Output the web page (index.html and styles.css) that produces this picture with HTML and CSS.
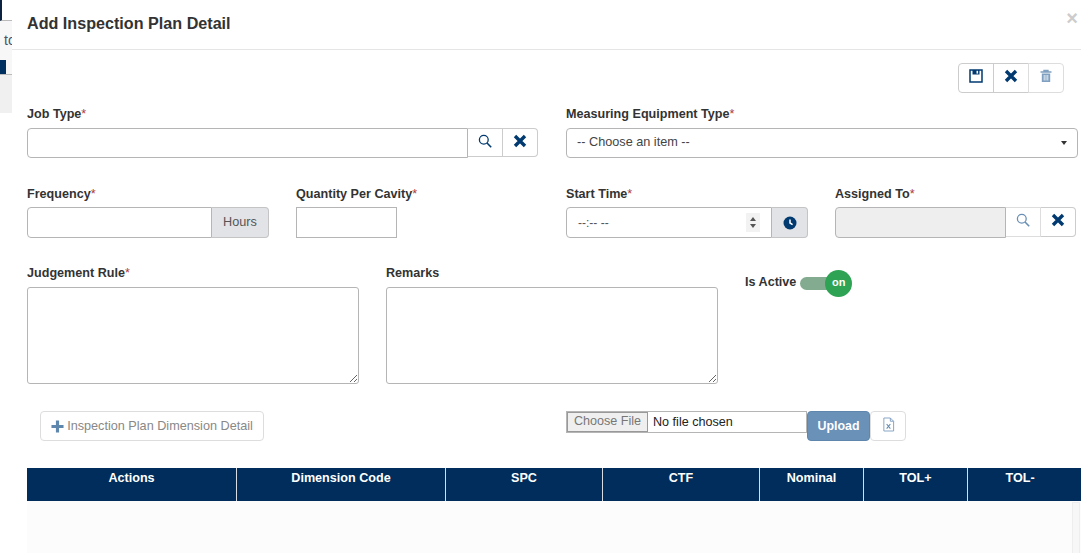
FILE: index.html
```html
<!DOCTYPE html>
<html lang="en">
<head>
  <meta charset="UTF-8" />
  <title>Add Inspection Plan Detail</title>
  <link rel="stylesheet" href="styles.css">
</head>
<body>
  <div class="behind">
    <div class="behind-top"></div>
    <div class="behind-text">to</div>
    <div class="behind-bar"><span></span></div>
    <div class="behind-foot"></div>
  </div>

  <div class="modal">
    <div class="modal-header">
      <h4>Add Inspection Plan Detail</h4>
      <span class="close">&times;</span>
    </div>

    <div class="modal-body">
      <div class="toolbar">
        <div class="btn-group">
          <button class="icon-btn w35"><svg class="ico" viewBox="0 0 14 14"><path d="M1 1h12v12H1z" fill="none" stroke="#003a70" stroke-width="1.5"/><path d="M3.5 1h7v4.5h-7z" fill="#003a70"/><path d="M7.500 1.800h1.600v2.800H7.500z" fill="#fff"/></svg></button>
          <button class="icon-btn w35"><svg class="ico" viewBox="0 0 14 14"><path d="M2 2l10 10M12 2L2 12" stroke="#003a70" stroke-width="3.4" fill="none"/></svg></button>
          <button class="icon-btn w35 off"><svg class="ico" viewBox="0 0 14 14"><path d="M1.500 3h11M5 3V1.500h4V3" fill="none" stroke="#7fa0c0" stroke-width="1.400"/><path d="M2.800 4.500h8.400V13H2.800z" fill="#7fa0c0"/><path d="M5.200 6v5.500M7 6v5.500M8.800 6v5.500" stroke="#fff" stroke-width=".8"/></svg></button>
        </div>
      </div>

      <div class="row row-one">
        <div class="field job-type">
          <label>Job Type<em>*</em></label>
          <div class="group">
            <input class="ctl grow joined" type="text">
            <button class="icon-btn no-left"><svg class="ico" viewBox="0 0 14 14"><circle cx="5.800" cy="5.800" r="4.400" fill="none" stroke="#003a70" stroke-width="1.300"/><path d="M9 9l4.200 4.200" stroke="#003a70" stroke-width="1.600"/></svg></button>
            <button class="icon-btn end"><svg class="ico" viewBox="0 0 14 14"><path d="M2 2l10 10M12 2L2 12" stroke="#003a70" stroke-width="3.400" fill="none"/></svg></button>
          </div>
        </div>
        <div class="field equip">
          <label>Measuring Equipment Type<em>*</em></label>
          <div class="select ctl">-- Choose an item --<span class="caret"></span></div>
        </div>
      </div>

      <div class="row row-two">
        <div class="field freq">
          <label>Frequency<em>*</em></label>
          <div class="group">
            <input class="ctl grow joined" type="text">
            <span class="addon hours">Hours</span>
          </div>
        </div>
        <div class="field qty">
          <label>Quantity Per Cavity<em>*</em></label>
          <input class="ctl square" type="text">
        </div>
        <div class="field start">
          <label>Start Time<em>*</em></label>
          <div class="group">
            <div class="ctl grow joined time">--:-- --
              <span class="spin"><i class="up"></i><i class="down"></i></span>
            </div>
            <span class="addon clock"><svg class="ico" viewBox="0 0 14 14"><circle cx="7" cy="7" r="6.500" fill="#003a70"/><path d="M7 3.500V7l2.600 1.600" fill="none" stroke="#fff" stroke-width="1.500"/></svg></span>
          </div>
        </div>
        <div class="field assigned">
          <label>Assigned To<em>*</em></label>
          <div class="group">
            <input class="ctl grow joined" type="text" disabled>
            <button class="icon-btn no-left off"><svg class="ico" viewBox="0 0 14 14"><circle cx="5.800" cy="5.800" r="4.400" fill="none" stroke="#6a8fb5" stroke-width="1.300"/><path d="M9 9l4.200 4.200" stroke="#6a8fb5" stroke-width="1.600"/></svg></button>
            <button class="icon-btn end"><svg class="ico" viewBox="0 0 14 14"><path d="M2 2l10 10M12 2L2 12" stroke="#003a70" stroke-width="3.400" fill="none"/></svg></button>
          </div>
        </div>
      </div>

      <div class="row row-three">
        <div class="field rule">
          <label>Judgement Rule<em>*</em></label>
          <textarea class="ctl area"></textarea>
        </div>
        <div class="field remarks">
          <label>Remarks</label>
          <textarea class="ctl area"></textarea>
        </div>
        <div class="active">
          <label>Is Active</label>
          <div class="switch"><span class="knob">on</span></div>
        </div>
      </div>

      <div class="row row-four">
        <button class="add-btn"><svg class="plus" viewBox="0 0 14 14"><path d="M7 .5v13M.5 7h13" stroke="#5f87ad" stroke-width="3.400"/></svg>Inspection Plan Dimension Detail</button>
        <div class="upload">
          <div class="file"><span class="file-btn">Choose File</span><span class="file-name">No file chosen</span></div>
          <button class="upload-btn">Upload</button>
          <button class="xls-btn"><svg class="xls" viewBox="0 0 14 16"><path d="M2 1h7l3.500 3.500V15H2z" fill="none" stroke="#7f9fc0"/><path d="M9 1v3.500h3.500" fill="none" stroke="#7f9fc0"/><path d="M5 7.500l4 5M9 7.500l-4 5" stroke="#5f87ad" stroke-width="1.100"/></svg></button>
        </div>
      </div>

      <div class="table-wrap">
        <div class="thead">
          <div class="th c1">Actions</div>
          <div class="th c2">Dimension Code</div>
          <div class="th c3">SPC</div>
          <div class="th c4">CTF</div>
          <div class="th c5">Nominal</div>
          <div class="th c6">TOL+</div>
          <div class="th c7">TOL-</div>
        </div>
        <div class="tbody"><div class="scrollbar"></div></div>
      </div>
    </div>
  </div>
</body>
</html>
```

FILE: styles.css
```css
* {
  box-sizing: border-box;
}
html, body {
  height: 553px;
  overflow: hidden;
}
body {
  margin: 0;
  background: #fff;
  color: #333;
  font-family: "Liberation Sans", Arial, sans-serif;
  font-size: 13px;
}
button {
  font-family: inherit;
}

/* page left showing behind the dialog */
.behind {
  position: absolute;
  left: 0;
  top: 0;
  width: 12px;
  height: 113px;
  overflow: hidden;
}
.behind-top {
  height: 21px;
  border-left: 2px solid #0b2340;
  border-bottom: 1px solid #bbb;
}
.behind-text {
  height: 39px;
  padding: 11px 0 0 4px;
  font-size: 14px;
  color: #44546a;
  background: #f7f7f7;
}
.behind-bar {
  height: 14px;
  background: #f7f7f7;
}
.behind-bar span {
  display: block;
  height: 14px;
  width: 6px;
  background: #003060;
}
.behind-foot {
  height: 39px;
  background: #f0f0f0;
  border-top: 1px solid #bbb;
}

.modal {
  margin-left: 12px;
  height: 553px;
  background: #fff;
  position: relative;
}
.modal-header {
  height: 50px;
  padding: 14px 15px 0 15px;
  border-bottom: 1px solid #e5e5e5;
  display: flex;
  justify-content: space-between;
}
.modal-header h4 {
  margin: 0;
  font-size: 16.15px;
  line-height: 19px;
  font-weight: bold;
}
.close {
  font-size: 20px;
  line-height: 10px;
  font-weight: bold;
  color: #ccc;
  margin: -1px -12px 0 0;
}

.modal-body {
  padding: 13px 0 0 15px;
}
.toolbar {
  display: flex;
  justify-content: flex-end;
  padding-right: 17px;
  height: 30px;
}
.btn-group {
  display: flex;
}
.btn-group .icon-btn + .icon-btn {
  margin-left: -1px;
}
.btn-group .icon-btn:first-child {
  border-radius: 4px 0 0 4px;
}
.btn-group .icon-btn:last-child {
  border-radius: 0 4px 4px 0;
}

.icon-btn {
  height: 30px;
  background: #fff;
  border: 1px solid #ccc;
  padding: 5px 0 0;
  display: flex;
  align-items: flex-start;
  justify-content: center;
}
.icon-btn.off {
  border-color: #ddd;
}
.w35 {
  width: 36px;
}
.no-left {
  border-left: none;
  width: 35px;
}
.end {
  width: 35px;
  border-left: none;
  border-radius: 0 4px 4px 0;
}
.ico {
  width: 14px;
  height: 14px;
}

.row {
  display: flex;
}
.row-one {
  margin-top: 13px;
}
.row-one .icon-btn {
  height: 29px;
}
.row-two {
  margin-top: 28px;
}
.row-two label {
  margin-bottom: 5px;
}
.row-two .ctl,
.row-two .addon {
  height: 31px;
}
.row-three {
  margin-top: 27px;
}
.row-four {
  margin-top: 27px;
}
label {
  display: block;
  font-weight: bold;
  font-size: 12.6px;
  line-height: 15px;
  padding-top: 1px;
  margin-bottom: 6px;
  white-space: nowrap;
}
label em {
  color: #b03a3a;
  font-style: normal;
  font-weight: normal;
}
.group {
  display: flex;
  align-items: flex-start;
}
.ctl {
  height: 30px;
  background: #fff;
  border: 1px solid #b5b5b5;
  border-radius: 4px;
  font-family: inherit;
  font-size: 12.7px;
  color: #444;
}
.grow {
  flex: 1;
  min-width: 0;
}
.joined {
  border-radius: 4px 0 0 4px;
}
.ctl:disabled {
  background: #eee;
}
.addon {
  height: 30px;
  background: #e1e3e6;
  border: 1px solid #c4c4c4;
  border-left: none;
  border-radius: 0 4px 4px 0;
  display: flex;
  align-items: center;
  justify-content: center;
  font-size: 12.7px;
  color: #555;
}
.hours {
  padding-bottom: 2px;
}

.job-type {
  width: 511px;
}
.equip {
  width: 512px;
  margin-left: 28px;
}
.select {
  display: flex;
  align-items: center;
  justify-content: space-between;
  padding: 0 10px 2px;
}
.caret {
  margin-top: 2px;
  border-top: 4px solid #333;
  border-left: 3.5px solid transparent;
  border-right: 3.5px solid transparent;
}

.freq {
  width: 242px;
}
.freq .addon {
  width: 57px;
}
.qty {
  width: 101px;
  margin-left: 27px;
}
.square {
  border-radius: 0;
  width: 101px;
}
.start {
  width: 242px;
  margin-left: 169px;
}
.time {
  display: flex;
  align-items: center;
  justify-content: space-between;
  padding: 0 11px;
  font-size: 12px;
  color: #555;
}
.spin {
  width: 14px;
  height: 19px;
  background: #f2f2f2;
  display: flex;
  flex-direction: column;
  align-items: center;
  justify-content: center;
  gap: 3px;
}
.spin i {
  border-left: 3.5px solid transparent;
  border-right: 3.5px solid transparent;
}
.spin .up {
  border-bottom: 4px solid #555;
}
.spin .down {
  border-top: 4px solid #555;
}
.clock {
  width: 36px;
}
.assigned {
  width: 241px;
  margin-left: 27px;
}

.area {
  display: block;
  height: 97px;
  border-radius: 3px;
}
.rule {
  width: 332px;
}
.rule .area {
  width: 332px;
}
.remarks {
  width: 332px;
  margin-left: 27px;
}
.remarks .area {
  width: 332px;
}
.active {
  display: flex;
  align-items: flex-start;
  margin-left: 27px;
  width: 120px;
}
.active label {
  margin: 9px 4px 0 0;
}
.switch {
  width: 40px;
  height: 13px;
  margin-top: 12px;
  background: #83ab8f;
  border-radius: 7px;
  position: relative;
}
.knob {
  position: absolute;
  right: -12px;
  top: -7px;
  width: 27px;
  height: 27px;
  border-radius: 50%;
  background: #2ea354;
  color: #fff;
  font-size: 11px;
  font-weight: bold;
  line-height: 24px;
  text-align: center;
}

.add-btn {
  margin-left: 13px;
  width: 224px;
  height: 30px;
  background: #fff;
  border: 1px solid #ddd;
  border-radius: 4px;
  color: #888;
  font-size: 12.67px;
  display: flex;
  align-items: center;
  justify-content: center;
  padding: 0;
  white-space: nowrap;
}
.plus {
  width: 13px;
  height: 13px;
  margin-right: 3px;
}
.upload {
  display: flex;
  margin-left: 302px;
  align-items: flex-start;
}
.file {
  width: 241px;
  height: 22px;
  border: 1px solid #b5b5b5;
  display: flex;
  align-items: center;
  font-size: 12.6px;
  color: #222;
}
.file-btn {
  height: 20px;
  width: 81px;
  text-align: center;
  background: #efefef;
  border: 1px solid #999;
  color: #777;
  font-size: 12.6px;
  line-height: 17px;
  margin-right: 5px;
  white-space: nowrap;
}
.upload-btn {
  width: 63px;
  height: 30px;
  background: #6a91b8;
  border: 1px solid #5f87ad;
  border-radius: 4px;
  color: #fff;
  font-size: 12.4px;
  font-weight: bold;
  padding: 0;
}
.xls-btn {
  width: 36px;
  height: 30px;
  background: #fff;
  border: 1px solid #ddd;
  border-radius: 4px;
  padding: 0 0 3px;
}
.xls {
  width: 13px;
  height: 15px;
  display: block;
  margin: 0 auto;
}

.table-wrap {
  margin-top: 27px;
}
.thead {
  display: flex;
  height: 33px;
  background: #002d5c;
}
.th {
  color: #fff;
  font-size: 12.6px;
  font-weight: bold;
  text-align: center;
  padding-top: 3px;
  line-height: 15px;
  border-right: 1px solid #d8dde3;
}
.c1 { width: 210px; }
.c2 { width: 209px; }
.c3 { width: 157px; }
.c4 { width: 157px; }
.c5 { width: 104px; }
.c6 { width: 104px; }
.c7 { width: 113px; padding-right: 9px; border-right: none; }
.tbody {
  height: 60px;
  background: #fcfcfc;
  display: flex;
  justify-content: flex-end;
}
.scrollbar {
  width: 8px;
  margin: 1px 1px 0 0;
  background: #f7f7f7;
  border: 1px solid #eee;
}
```
